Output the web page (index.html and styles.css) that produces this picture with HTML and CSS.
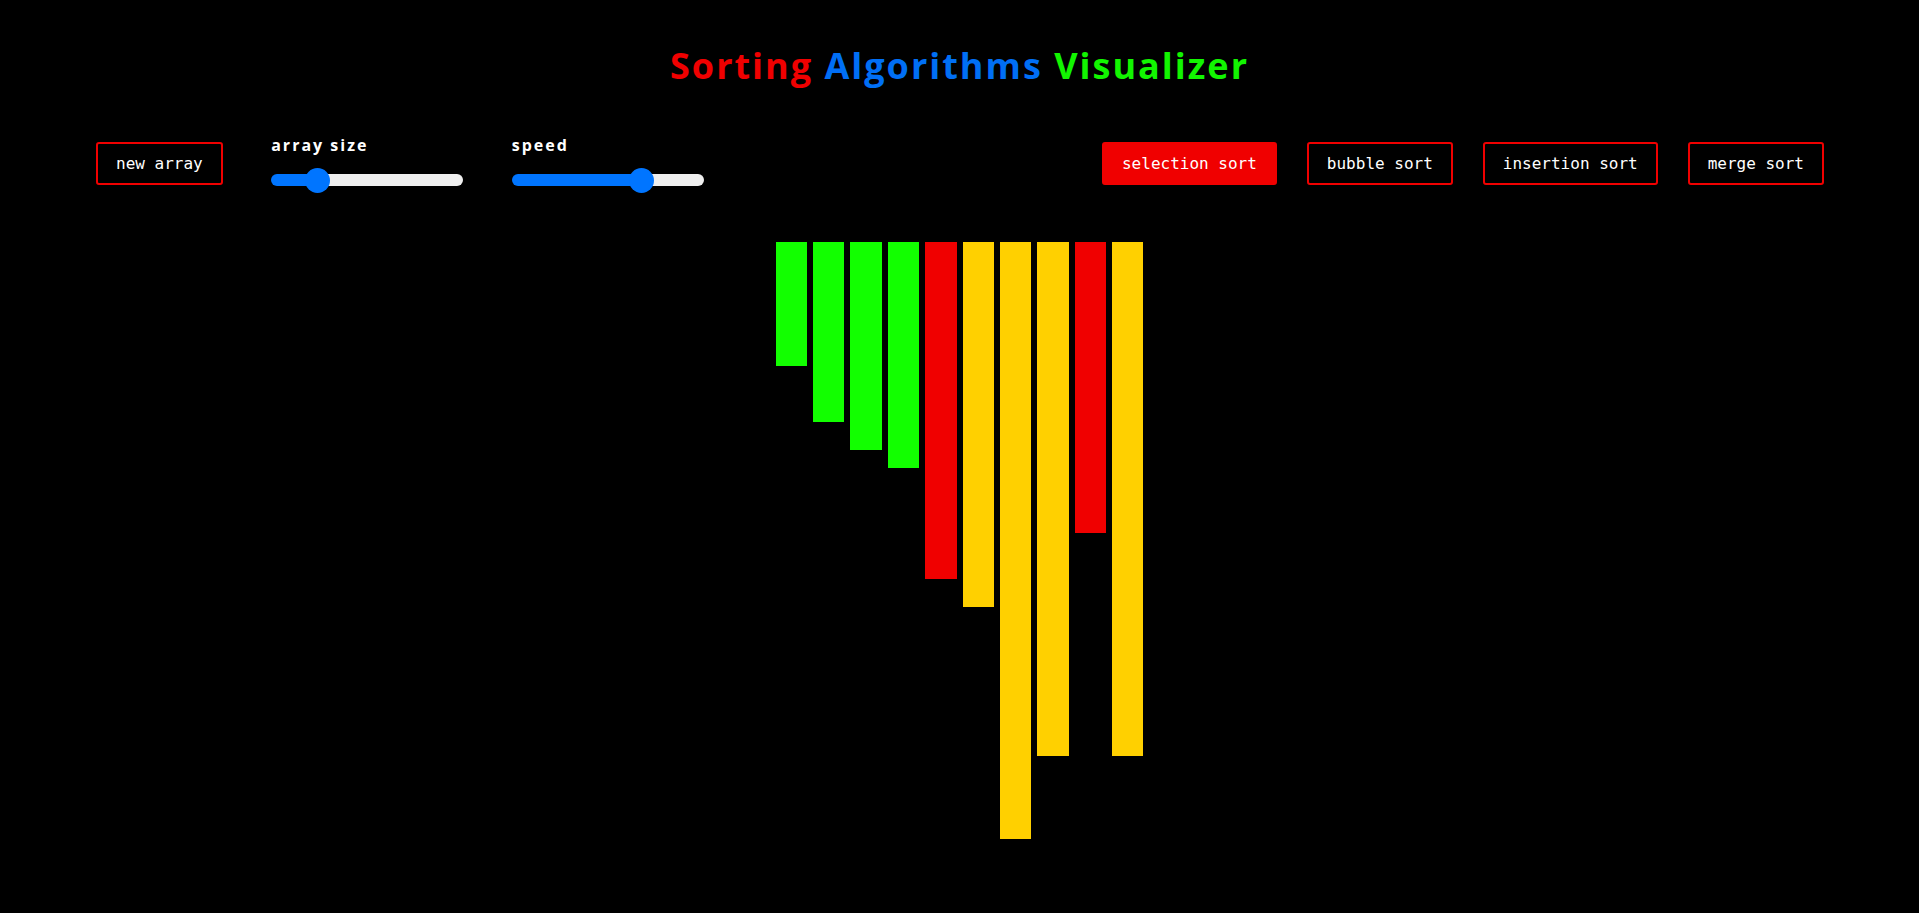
FILE: index.html
```html
<!DOCTYPE html>
<html lang="en">
<head>
<meta charset="utf-8">
<title>Sorting Algorithms Visualizer</title>
<link rel="stylesheet" href="styles.css">
</head>
<body>
<h1 class="title"><span class="t-red">Sorting</span> <span class="t-blue">Algorithms</span> <span class="t-green">Visualizer</span></h1>
<div class="toolbar">
  <div class="left-group">
    <button class="btn">new array</button>
    <div class="slider-group">
      <label class="slider-label">array size</label>
      <input class="slider" type="range" min="0" max="1000" value="204" style="--fill:24.2%">
    </div>
    <div class="slider-group">
      <label class="slider-label">speed</label>
      <input class="slider" type="range" min="0" max="1000" value="705" style="--fill:68%">
    </div>
  </div>
  <div class="right-group">
    <button class="btn active">selection sort</button>
    <button class="btn">bubble sort</button>
    <button class="btn">insertion sort</button>
    <button class="btn">merge sort</button>
  </div>
</div>
<div class="bars">
  <div class="bar green" style="height:124px"></div>
  <div class="bar green" style="height:180px"></div>
  <div class="bar green" style="height:208px"></div>
  <div class="bar green" style="height:226px"></div>
  <div class="bar red" style="height:337px"></div>
  <div class="bar yellow" style="height:365px"></div>
  <div class="bar yellow" style="height:597px"></div>
  <div class="bar yellow" style="height:514px"></div>
  <div class="bar red" style="height:291px"></div>
  <div class="bar yellow" style="height:514px"></div>
</div>
</body>
</html>
```
FILE: styles.css
```css
html, body {
  margin: 0;
  padding: 0;
  background: #000;
}
body {
  font-family: "Open Sans", "DejaVu Sans", sans-serif;
  color: #fff;
}
.title {
  margin: 0;
  padding-top: 46px;
  font-size: 36px;
  line-height: 40px;
  font-weight: 700;
  letter-spacing: 2px;
  text-align: center;
}
.t-red { color: #f00000; }
.t-blue { color: #006ff5; }
.t-green { color: #12f500; }

.toolbar {
  display: flex;
  justify-content: space-between;
  align-items: flex-start;
  padding: 0 95px 0 96px;
  margin-top: 50px;
}
.left-group {
  display: flex;
  align-items: flex-start;
  gap: 48.5px;
}
.right-group {
  display: flex;
  align-items: flex-start;
  gap: 30px;
  margin-top: 6px;
}
.left-group .btn {
  margin-top: 6px;
}
.btn {
  font-family: "DejaVu Sans Mono", "Liberation Mono", monospace;
  font-size: 16px;
  line-height: 19px;
  color: #fff;
  background: #000;
  border: 2px solid #f00000;
  border-radius: 3px;
  padding: 10px 18px;
  margin: 0;
}
.btn.active {
  background: #f00000;
}
.slider-group {
  display: flex;
  flex-direction: column;
}
.slider-label {
  font-size: 16px;
  line-height: 18px;
  font-weight: 700;
  letter-spacing: 2px;
  color: #fff;
}
.slider {
  -webkit-appearance: none;
  appearance: none;
  width: 192px;
  height: 12px;
  margin: 20px 0 0 0;
  border-radius: 6px;
  outline: none;
  background: linear-gradient(to right, #0075ff 0, #0075ff var(--fill), #efefef var(--fill), #efefef 100%);
}
.slider::-webkit-slider-thumb {
  -webkit-appearance: none;
  appearance: none;
  width: 25px;
  height: 25px;
  border-radius: 50%;
  background: #0075ff;
  border: none;
}
.bars {
  display: flex;
  justify-content: center;
  align-items: flex-start;
  margin-top: 56px;
}
.bar {
  width: 31.4px;
  margin: 0 3px;
}
.bar.green { background: #12ff00; }
.bar.red { background: #f00000; }
.bar.yellow { background: #ffd000; }
```
